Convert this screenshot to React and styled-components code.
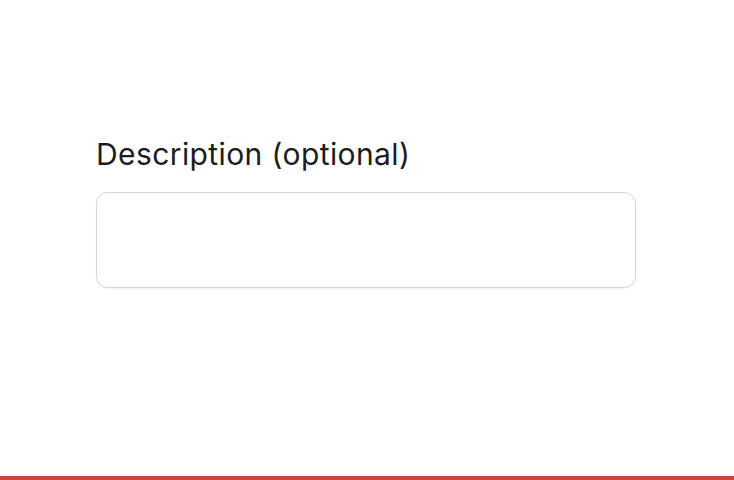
import React from "react";
import styled, { createGlobalStyle } from "styled-components";

const Global = createGlobalStyle`
  html, body { margin: 0; padding: 0; background: #ffffff; }
  body { font-family: Inter, "Noto Sans", sans-serif; }
`;

const Page = styled.div`
  position: relative;
  width: 734px;
  height: 480px;
  box-sizing: border-box;
  display: flex;
  flex-direction: column;
  justify-content: space-between;
  overflow: hidden;
`;

const Field = styled.div`
  display: flex;
  flex-direction: column;
  gap: 18px;
  padding: 134px 0 0 96px;
`;

const Label = styled.label`
  font-size: 30px;
  line-height: 40px;
  color: #1c1c1f;
  font-weight: 400;
  letter-spacing: 0.4px;
`;

const TextArea = styled.textarea`
  width: 540px;
  height: 96px;
  box-sizing: border-box;
  border: 1px solid #d6d5de;
  border-radius: 12px;
  box-shadow: 0 1px 2px rgba(16, 16, 40, 0.06);
  resize: none;
  outline: none;
  padding: 12px 16px;
  font-family: inherit;
  font-size: 16px;
`;

const Bar = styled.div`
  height: 4px;
  background: #d13f3f;
`;

export default function App() {
  return (
    <>
      <Global />
      <Page>
        <Field>
          <Label htmlFor="desc">Description (optional)</Label>
          <TextArea id="desc" />
        </Field>
        <Bar />
      </Page>
    </>
  );
}
